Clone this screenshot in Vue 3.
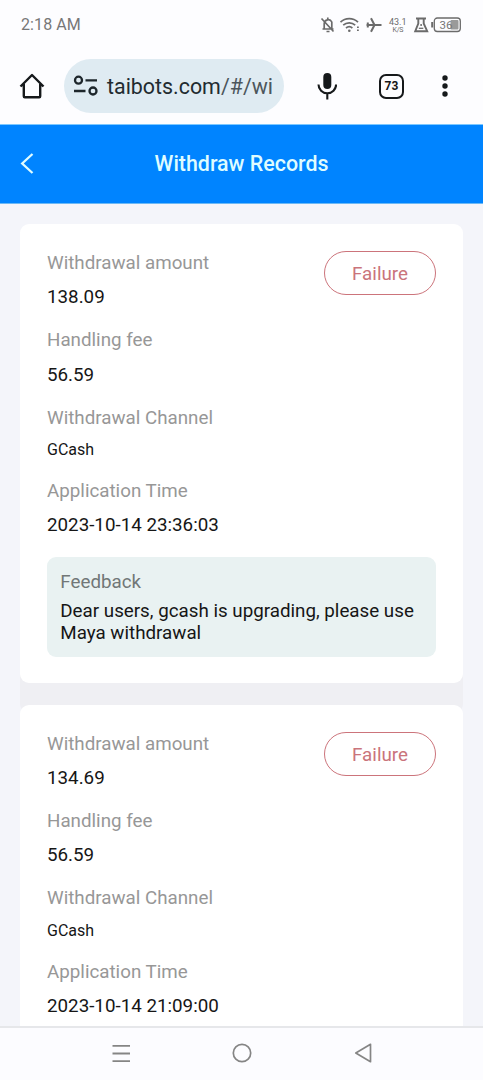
<script setup>
const records = [
  {
    amount: '138.09', fee: '56.59', channel: 'GCash', time: '2023-10-14 23:36:03',
    feedback: 'Dear users, gcash is upgrading, please use Maya withdrawal',
  },
  { amount: '134.69', fee: '56.59', channel: 'GCash', time: '2023-10-14 21:09:00' },
]
</script>

<template>
  <div class="screen">
    <header class="status">
      <span class="clock">2:18 AM</span>
      <svg class="status-icons" width="142" height="18" viewBox="0 0 142 18" fill="none" stroke="#6b6b6b" stroke-width="1.5">
        <path d="M2.500 13h11M4.200 13V7.500a4 4 0 0 1 7.600-1.500v7M7.800 3.200V1.500M6.500 15.500h3M1.500 2.500l12 13" stroke-width="1.700" />
        <path d="M20.500 6.200a12.500 12.500 0 0 1 17.500 0M23.200 9.200a9 9 0 0 1 12 0M26 12a5 5 0 0 1 6.400 0" stroke-width="1.700" />
        <circle cx="29.300" cy="14.700" r="1.300" fill="#6b6b6b" stroke="none" />
        <path d="M37 11.300h1.800M37 14.200h1.800" stroke-width="1.400" />
        <path d="M46.500 9h15M54.500 9L51 2.300M54.500 9L51 15.700M47.800 6.500v5" stroke-width="2" />
        <g fill="#6b6b6b" stroke="none" class="net">
          <text x="69" y="9" font-size="9" textLength="17.500">43.1</text>
          <text x="72.500" y="16" font-size="7" textLength="11">K/S</text>
        </g>
        <path d="M96 2.500h10M98.300 2.500v5L95.200 15.200h12L103.700 7.500v-5" stroke-width="1.900" />
        <path d="M98.800 12.300h4.500" stroke-width="1.300" />
        <circle cx="101.100" cy="9" r="1" fill="#6b6b6b" stroke="none" />
        <rect x="114.300" y="2" width="26" height="13.500" rx="3" stroke-width="1.300" />
        <path d="M112.200 6v5.500" stroke-width="2" />
        <rect x="130.500" y="4" width="8" height="9.500" rx="1" fill="#9a9a9a" stroke="none" />
        <text class="net" x="119.500" y="12.900" font-size="11.500" fill="#777" stroke="none">36</text>
      </svg>
    </header>

    <div class="browser">
      <svg class="home" width="26" height="28" viewBox="0 0 26 28" fill="none" stroke="#16191b" stroke-width="2.400" stroke-linejoin="round">
        <path d="M1.500 14.500L13 3l11.500 11.500M4.800 12v12.300q0 1 1 1h14.400q1 0 1-1V12" />
      </svg>
      <div class="url">
        <svg width="26" height="24" viewBox="0 0 26 24" fill="none" stroke="#1d262b" stroke-width="2.300">
          <circle cx="5.500" cy="6.200" r="3.500" /><path d="M12.500 6.300H24M1 17H12.500" />
          <circle cx="20" cy="17" r="3.500" />
        </svg>
        <span class="address">taibots.com<span class="path">/#/wi</span></span>
      </div>
      <svg class="mic" width="20" height="28" viewBox="0 0 20 28" fill="none" stroke="#16191b" stroke-width="2.100">
        <rect x="6.300" y="1" width="8" height="16" rx="4" fill="#16191b" stroke="none" />
        <path d="M1.500 12.500a8.800 8.800 0 0 0 17.600 0M10.300 21v6.500" />
      </svg>
      <span class="tabs">73</span>
      <svg class="dots" width="8" height="24" viewBox="0 0 8 24" fill="#16191b">
        <circle cx="4" cy="4" r="2.700" /><circle cx="4" cy="12" r="2.700" /><circle cx="4" cy="20" r="2.700" />
      </svg>
    </div>

    <nav class="title-bar">
      <svg width="14" height="22" viewBox="0 0 14 22" fill="none" stroke="#dffcff" stroke-width="2.300">
        <path d="M12.500 1L2.200 10.500l10.300 9.500" />
      </svg>
      <h1>Withdraw Records</h1>
    </nav>

    <main class="list">
      <article v-for="r in records" :key="r.time" class="card">
        <dl>
          <dt>Withdrawal amount</dt><dd>{{ r.amount }}</dd>
          <dt>Handling fee</dt><dd>{{ r.fee }}</dd>
          <dt>Withdrawal Channel</dt><dd class="channel">{{ r.channel }}</dd>
          <dt>Application Time</dt><dd>{{ r.time }}</dd>
        </dl>
        <span class="badge">Failure</span>
        <section v-if="r.feedback" class="feedback">
          <h2>Feedback</h2>
          <p>{{ r.feedback }}</p>
        </section>
      </article>
    </main>

    <footer class="system-nav">
      <svg width="20" height="20" viewBox="0 0 20 20" stroke="#858585" stroke-width="1.800"><path d="M1.500 2.800h17.500M1.500 10.500h17.500M1.500 18.100h17.500" /></svg>
      <svg width="20" height="20" viewBox="0 0 20 20" fill="none" stroke="#858585" stroke-width="1.700"><circle cx="10" cy="10" r="8.700" /></svg>
      <svg width="20" height="20" viewBox="0 0 20 20" fill="none" stroke="#858585" stroke-width="1.700" stroke-linejoin="round"><path d="M17.500 1.300v17.400L2.800 10z" /></svg>
    </footer>
  </div>
</template>

<style>
body { margin: 0; overflow: hidden; }
</style>

<style scoped>
.screen {
  display: flex;
  flex-direction: column;
  height: 1080px;
  overflow: hidden;
  background: #f4f5fa;
  color: #161616;
  font: 18.77px/22px Roboto, "Liberation Sans", sans-serif;
}
.status {
  flex: none;
  display: flex;
  justify-content: space-between;
  align-items: center;
  box-sizing: border-box;
  height: 48px;
  padding: 1px 21px 0;
  background: #fdfdff;
}
.clock { color: #777; font-size: 16px; letter-spacing: .1px; padding-top: 1px; }
.net { font-family: Roboto, sans-serif; }
.browser {
  flex: none;
  display: flex;
  align-items: center;
  height: 76px;
  padding: 0 34px 0 19px;
  background: #fdfdff;
}
.home, .url, .mic, .tabs, .dots { flex: none; }
.url {
  display: flex;
  align-items: center;
  gap: 8px;
  box-sizing: border-box;
  width: 220px;
  height: 54px;
  margin: 0 33px 0 19px;
  padding-left: 9px;
  border-radius: 27px;
  background: #dfebf2;
}
.address { color: #222b30; font-size: 21.4px; line-height: 28px; padding-top: 2px; white-space: nowrap; }
.path { color: #4c565c; }
.tabs {
  box-sizing: border-box;
  width: 25px;
  height: 25px;
  margin: 0 37px 0 42px;
  border: 2.400px solid #16191b;
  border-radius: 7px;
  font-size: 12px;
  font-weight: 700;
  line-height: 21px;
  text-align: center;
}
.title-bar {
  flex: none;
  display: grid;
  grid-template-columns: 20px 1fr 20px;
  align-items: center;
  box-sizing: border-box;
  height: 80px;
  padding: 0 20px;
  border-top: 1px solid #7cc8ff;
  border-bottom: 1px solid #6cb9f5;
  background: #0084ff;
}
h1 { margin: 0; color: #dffcff; font-size: 21.4px; font-weight: 500; text-align: center; white-space: nowrap; }
.list {
  flex: 1;
  min-height: 0;
  overflow: hidden;
  display: flex;
  flex-direction: column;
  gap: 21.500px;
  padding: 20px 20.500px 0 20px;
}
.card {
  flex: none;
  display: grid;
  grid-template-columns: 1fr auto;
  align-items: start;
  padding: 27px 26.500px 26.600px 27px;
  border-radius: 9px;
  background: #fff;
  box-shadow: 0 30px 0 #efeff3;
}
dl { margin: 0; padding-top: 1px; }
dt { color: #979797; margin-bottom: 12.300px; }
dd { margin: 0 0 21px; }
dd.channel { font-size: 16px; line-height: 18.700px; margin-bottom: 20.600px; }
dd:last-child { margin-bottom: 20.500px; }
.badge {
  box-sizing: border-box;
  width: 112px;
  height: 44px;
  border: 1.300px solid #cc747b;
  border-radius: 22px;
  color: #ca747b;
  line-height: 44px;
  text-align: center;
}
.feedback {
  grid-column: 1 / -1;
  padding: 13.600px 13.300px 13px;
  border-radius: 9px;
  background: #e9f2f2;
}
h2 { margin: 0 0 7px; color: #717777; font-size: inherit; font-weight: 400; }
p { margin: 0; }
.system-nav {
  flex: none;
  display: flex;
  justify-content: center;
  gap: 101px;
  box-sizing: border-box;
  height: 54px;
  padding-top: 15px;
  border-top: 2px solid #e6e7ea;
  background: #fcfcff;
}
</style>
